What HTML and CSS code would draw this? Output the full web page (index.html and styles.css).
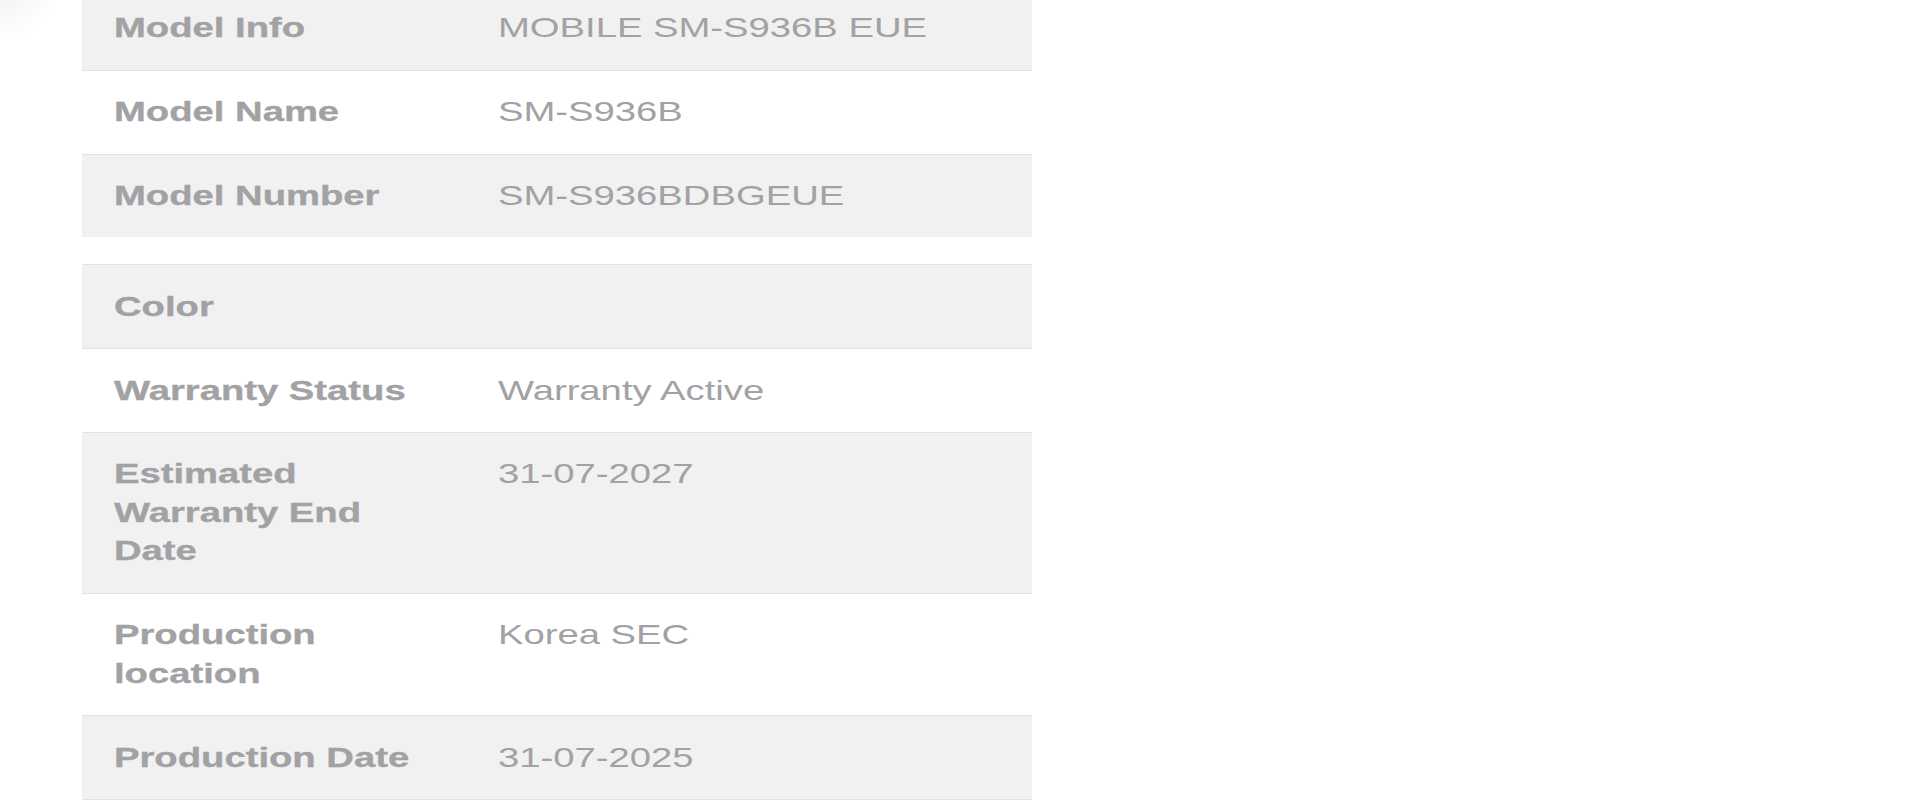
FILE: index.html
```html
<!DOCTYPE html>
<html lang="en">
<head>
<meta charset="utf-8">
<title>Device Info</title>
<link rel="stylesheet" href="styles.css">
</head>
<body>
<div class="blob"></div>
<main class="page">
  <section class="tbl">
    <div class="row alt">
      <div class="cell k"><span class="t">Model Info</span></div>
      <div class="cell v"><span class="t">MOBILE SM-S936B EUE</span></div>
    </div>
    <div class="row">
      <div class="cell k"><span class="t">Model Name</span></div>
      <div class="cell v"><span class="t">SM-S936B</span></div>
    </div>
    <div class="row alt">
      <div class="cell k"><span class="t">Model Number</span></div>
      <div class="cell v"><span class="t">SM-S936BDBGEUE</span></div>
    </div>
  </section>
  <section class="tbl tbl2">
    <div class="row alt">
      <div class="cell k"><span class="t">Color</span></div>
      <div class="cell v"><span class="t"></span></div>
    </div>
    <div class="row">
      <div class="cell k"><span class="t">Warranty Status</span></div>
      <div class="cell v"><span class="t">Warranty Active</span></div>
    </div>
    <div class="row alt">
      <div class="cell k"><span class="t">Estimated Warranty End Date</span></div>
      <div class="cell v"><span class="t">31-07-2027</span></div>
    </div>
    <div class="row">
      <div class="cell k"><span class="t">Production location</span></div>
      <div class="cell v"><span class="t">Korea SEC</span></div>
    </div>
    <div class="row alt">
      <div class="cell k"><span class="t">Production Date</span></div>
      <div class="cell v"><span class="t">31-07-2025</span></div>
    </div>
  </section>
</main>
</body>
</html>
```

FILE: styles.css
```css
html, body {
  margin: 0;
  padding: 0;
  background: #ffffff;
  overflow: hidden;
}

body {
  font-family: "Liberation Sans", Arial, sans-serif;
  color: #a2a2a4;
}

.blob {
  position: absolute;
  left: -60px;
  top: -60px;
  width: 120px;
  height: 100px;
  border-radius: 50%;
  background: radial-gradient(closest-side, rgba(0, 0, 0, 0.05), rgba(0, 0, 0, 0));
  pointer-events: none;
}

.page {
  width: 950px;
  margin: -14.2px 0 0 82px;
}

.tbl {
  display: flex;
  flex-direction: column;
  margin-bottom: 27px;
}

.tbl2 {
  border-bottom: 1px solid #dee2e6;
}

.row {
  display: grid;
  grid-template-columns: 384px 1fr;
  border-top: 1px solid #dee2e6;
  background: #ffffff;
}

.row.alt {
  background: #f1f1f1;
}

.cell {
  padding: 22.2px 31.5px;
  font-size: 28px;
  line-height: 38.5px;
  min-height: 38.5px;
}

.k {
  font-weight: 700;
}

.k .t {
  width: 234px;
  -webkit-text-stroke: 0.35px #a2a2a4;
}

.v {
  font-weight: 400;
}

.t {
  display: block;
  transform: scaleX(1.365);
  transform-origin: 0 0;
}

.v .t {
  white-space: nowrap;
}
```
